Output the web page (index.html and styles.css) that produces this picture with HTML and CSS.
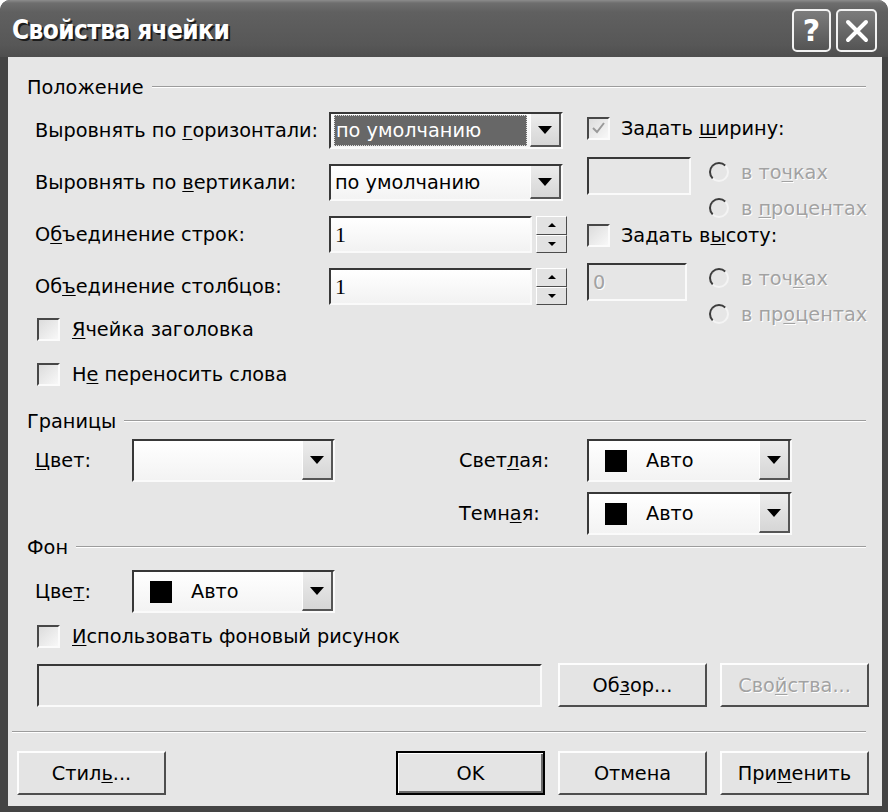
FILE: index.html
```html
<!DOCTYPE html>
<html lang="ru">
<head>
  <meta charset="UTF-8" />
  <title>Свойства ячейки</title>
  <link rel="stylesheet" href="styles.css">
</head>
<body>

<div class="window">
  <div class="titlebar">
    <span class="title">Свойства ячейки</span>
    <div class="title-btns">
      <span class="tbtn">?</span>
      <span class="tbtn">
        <svg width="24" height="24" viewBox="0 0 24 24"><path d="M3 3 L21 21 M21 3 L3 21" stroke="#fff" stroke-width="4" stroke-linecap="round"/></svg>
      </span>
    </div>
  </div>

  <div class="client">
    <div class="group-head"><span>Положение</span><i></i></div>

    <div class="pos">
      <div class="pos-left">
        <div class="frow">
          <label>Выровнять по <u>г</u>оризонтали:</label>
          <div class="combo"><span class="val"><span class="sel">по умолчанию</span></span><b class="drop"></b></div>
        </div>
        <div class="frow">
          <label>Выровнять по <u>в</u>ертикали:</label>
          <div class="combo"><span class="val">по умолчанию</span><b class="drop"></b></div>
        </div>
        <div class="frow">
          <label>О<u>б</u>ъединение строк:</label>
          <div class="spin">
            <div class="field num">1</div>
            <div class="spin-btns"><span class="up"></span><span class="down"></span></div>
          </div>
        </div>
        <div class="frow">
          <label>Об<u>ъ</u>единение столбцов:</label>
          <div class="spin">
            <div class="field num">1</div>
            <div class="spin-btns"><span class="up"></span><span class="down"></span></div>
          </div>
        </div>
        <div class="crow first"><span class="check"></span><span><u>Я</u>чейка заголовка</span></div>
        <div class="crow second"><span class="check"></span><span>Н<u>е</u> переносить слова</span></div>
      </div>

      <div class="pos-right">
        <div class="crow"><span class="check">
          <svg width="19" height="19" viewBox="0 0 19 19"><path d="M4 9 L8 13 L15 4" fill="none" stroke="#9a9a9a" stroke-width="2"/></svg>
        </span><span>Задать <u>ш</u>ирину:</span></div>
        <div class="size w">
          <div class="field dis"></div>
          <div class="radios">
            <div class="rrow"><span class="radio"></span><span class="dis-text">в то<u>ч</u>ках</span></div>
            <div class="rrow"><span class="radio"></span><span class="dis-text">в <u>п</u>роцентах</span></div>
          </div>
        </div>
        <div class="crow hcheck"><span class="check"></span><span>Задать в<u>ы</u>соту:</span></div>
        <div class="size h">
          <div class="field dis"><span class="dis-text">0</span></div>
          <div class="radios">
            <div class="rrow"><span class="radio"></span><span class="dis-text">в точ<u>к</u>ах</span></div>
            <div class="rrow"><span class="radio"></span><span class="dis-text">в пр<u>о</u>центах</span></div>
          </div>
        </div>
      </div>
    </div>

    <div class="group-head g2"><span>Границы</span><i></i></div>

    <div class="borders">
      <div class="brow-left">
        <label class="short"><u>Ц</u>вет:</label>
        <div class="combo color"><span class="val"></span><b class="drop"></b></div>
      </div>
      <div class="brow-right">
        <div class="brow">
          <label class="mid">Свет<u>л</u>ая:</label>
          <div class="combo color wide"><span class="val"><i class="swatch"></i>Авто</span><b class="drop"></b></div>
        </div>
        <div class="brow">
          <label class="mid">Темн<u>а</u>я:</label>
          <div class="combo color wide"><span class="val"><i class="swatch"></i>Авто</span><b class="drop"></b></div>
        </div>
      </div>
    </div>

    <div class="group-head g3"><span>Фон</span><i></i></div>

    <div class="bg-row">
      <label class="short">Цве<u>т</u>:</label>
      <div class="combo color"><span class="val"><i class="swatch"></i>Авто</span><b class="drop"></b></div>
    </div>
    <div class="crow pic"><span class="check"></span><span><u>И</u>спользовать фоновый рисунок</span></div>
    <div class="path-row">
      <div class="field path"></div>
      <span class="btn">Об<u>з</u>ор...</span>
      <span class="btn disabled">Сво<u>й</u>ства...</span>
    </div>

    <div class="sep"></div>

    <div class="bottom">
      <span class="btn">Стил<u>ь</u>...</span>
      <span class="spacer"></span>
      <span class="btn default">OK</span>
      <span class="btn">Отмена</span>
      <span class="btn">При<u>м</u>енить</span>
    </div>
  </div>
</div>

</body>
</html>
```

FILE: styles.css
```css
body {
  margin: 0;
  background: #fff;
  font-family: "DejaVu Sans", Verdana, sans-serif;
  font-size: 19.3px;
  color: #000;
}

u {
  text-underline-offset: 2px;
}

.window {
  width: 888px;
  height: 812px;
  background: #444;
  border-radius: 10px 10px 0 0;
  display: flex;
  flex-direction: column;
  overflow: hidden;
}

.titlebar {
  height: 57px;
  flex: none;
  display: flex;
  align-items: center;
  padding: 0 11px 0 12px;
  background: linear-gradient(#8c8c8c 0, #6e6e6e 3px, #606060 12px, #575757 45px, #4e4e4e 57px);
}

.title {
  flex: 1;
  color: #fff;
  font: bold 26px "DejaVu Sans Condensed", "DejaVu Sans", sans-serif;
  letter-spacing: -0.6px;
  text-shadow: 2px 2px 0 #1c1c1c;
  margin-top: 2px;
}

.title-btns {
  display: flex;
  gap: 5px;
  margin-top: 4px;
}

.tbtn {
  width: 39px;
  height: 43px;
  box-sizing: border-box;
  border: 2px solid #f2f2f2;
  border-radius: 5px;
  background: linear-gradient(#7c7c7c, #545454);
  display: flex;
  align-items: center;
  justify-content: center;
  color: #fff;
  font: bold 30px "DejaVu Sans", sans-serif;
}

.tbtn + .tbtn {
  width: 41px;
}

.client {
  flex: 1;
  margin: 0 6px 6px 8px;
  background: #e6e6e6;
  display: flex;
  flex-direction: column;
}

/* group headers */
.group-head {
  display: flex;
  align-items: center;
  height: 20px;
  margin: 20px 16px 0 19px;
}

.group-head i {
  flex: 1;
  margin-left: 8px;
  border-top: 1px solid #9c9c9c;
  border-bottom: 1px solid #fff;
}

.group-head.g2 {
  margin-top: 22px;
}

.group-head.g3 {
  margin-top: 2px;
}

/* position section */
.pos {
  display: flex;
  margin: 15px 0 0 27px;
}

.pos-left {
  width: 532px;
  margin-right: 20px;
}

.frow {
  display: flex;
  align-items: center;
  height: 37px;
  margin-top: 15px;
}

.frow:first-child {
  margin-top: 0;
}

.frow label {
  width: 294px;
}

.combo {
  width: 234px;
  height: 37px;
  box-sizing: border-box;
  border: 2px solid;
  border-color: #383838 #fafafa #fafafa #383838;
  background: linear-gradient(#fff, #f3f3f3);
  display: flex;
  align-items: center;
}

.combo .val {
  flex: 1;
  align-self: stretch;
  display: flex;
  align-items: center;
  padding-left: 4px;
}

.combo .sel {
  flex: 1;
  align-self: stretch;
  margin: 1px 3px 1px -1px;
  padding-left: 2px;
  display: flex;
  align-items: center;
  background: #676767;
  color: #fff;
  outline: 1px dotted #ddd;
  outline-offset: -1px;
}

.drop {
  width: 31px;
  align-self: stretch;
  box-sizing: border-box;
  background: linear-gradient(#ececec, #d6d6d6);
  border-left: 1px solid #fff;
  border-right: 2px solid #555;
  border-bottom: 2px solid #555;
  display: flex;
  align-items: center;
  justify-content: center;
}

.drop::after {
  content: "";
  border-left: 7px solid transparent;
  border-right: 7px solid transparent;
  border-top: 8px solid #000;
}

.spin {
  display: flex;
  gap: 4px;
}

.field {
  width: 203px;
  height: 37px;
  box-sizing: border-box;
  border: 2px solid;
  border-color: #383838 #fafafa #fafafa #383838;
  background: linear-gradient(#fff, #f2f2f2);
  display: flex;
  align-items: center;
  padding-left: 4px;
}

.field.num {
  font-family: "Liberation Serif", serif;
  font-size: 22px;
}

.spin-btns {
  width: 31px;
  height: 37px;
  display: flex;
  flex-direction: column;
}

.spin-btns span {
  flex: 1;
  box-sizing: border-box;
  background: #e2e2e2;
  border: 1px solid;
  border-color: #fff #4c4c4c #4c4c4c #fff;
  display: flex;
  align-items: center;
  justify-content: center;
}

.spin-btns .up::after {
  content: "";
  border-left: 4px solid transparent;
  border-right: 4px solid transparent;
  border-bottom: 4px solid #000;
}

.spin-btns .down::after {
  content: "";
  border-left: 4px solid transparent;
  border-right: 4px solid transparent;
  border-top: 4px solid #000;
}

/* checkboxes */
.crow {
  display: flex;
  align-items: center;
  height: 30px;
  gap: 11px;
}

.pos-left .crow {
  margin-left: 2px;
  gap: 12px;
}

.crow.first {
  margin-top: 9px;
}

.crow.second {
  margin-top: 15px;
}

.check {
  width: 23px;
  height: 23px;
  flex: none;
  box-sizing: border-box;
  border: 2px solid;
  border-color: #474747 #fbfbfb #fbfbfb #474747;
  background: linear-gradient(135deg, #dcdcdc, #f8f8f8);
  display: flex;
  align-items: center;
  justify-content: center;
}

.pos-right {
  padding-top: 1px;
}

.size {
  display: flex;
  margin-top: 14px;
}

.size.h {
  margin-top: 13px;
}

.crow.hcheck {
  margin-top: 2px;
}

.size .field {
  width: 104px;
  height: 38px;
  background: #e6e6e6;
}

.size.h .field {
  width: 100px;
}

.radios {
  padding: 5px 0 0 18px;
  display: flex;
  flex-direction: column;
  gap: 16px;
}

.size.h .radios {
  padding-left: 22px;
}

.rrow {
  display: flex;
  align-items: center;
  height: 20px;
  gap: 12px;
}

.radio {
  width: 20px;
  height: 20px;
  box-sizing: border-box;
  border-radius: 50%;
  border: 2px solid;
  border-color: #3c3c3c #f4f4f4 #f4f4f4 #3c3c3c;
}

.dis-text {
  color: #a2a2a2;
  text-shadow: 1px 1px 0 #fff;
}

/* borders section */
.borders {
  display: flex;
  margin: 8px 0 0 27px;
}

.brow-left {
  display: flex;
  align-items: center;
  align-self: flex-start;
  width: 424px;
  height: 43px;
}

label.short {
  width: 97px;
}

label.mid {
  width: 128px;
}

.combo.color {
  width: 203px;
  height: 43px;
}

.combo.wide {
  width: 205px;
}

.swatch {
  width: 22px;
  height: 22px;
  background: #000;
  margin: 0 19px 0 12px;
}

.brow-right {
  display: flex;
  flex-direction: column;
  gap: 10px;
}

.brow {
  display: flex;
  align-items: center;
}

.bg-row {
  display: flex;
  align-items: center;
  margin: 13px 0 0 27px;
}

.crow.pic {
  margin: 8px 0 0 29px;
  gap: 12px;
}

.path-row {
  display: flex;
  align-items: center;
  margin: 12px 0 0 29px;
}

.field.path {
  width: 505px;
  height: 43px;
  background: #e6e6e6;
  margin-right: 16px;
}

.btn {
  width: 149px;
  height: 44px;
  box-sizing: border-box;
  border: 2px solid;
  border-color: #fdfdfd #4e4e4e #4e4e4e #fdfdfd;
  background: #e4e4e4;
  display: flex;
  align-items: center;
  justify-content: center;
}

.path-row .btn + .btn {
  margin-left: 13px;
}

.btn.disabled {
  color: #a2a2a2;
  text-shadow: 1px 1px 0 #fff;
}

.sep {
  margin: 24px 16px 0 4px;
  border-top: 1px solid #9c9c9c;
  border-bottom: 1px solid #fff;
}

.bottom {
  display: flex;
  margin: 18px 0 0 9px;
  gap: 13px;
}

.bottom .spacer {
  flex: none;
  width: 204px;
}

.btn.default {
  border-color: #000;
  box-shadow: inset 1px 1px 0 #fff, inset -2px -2px 0 #6a6a6a;
}
```
